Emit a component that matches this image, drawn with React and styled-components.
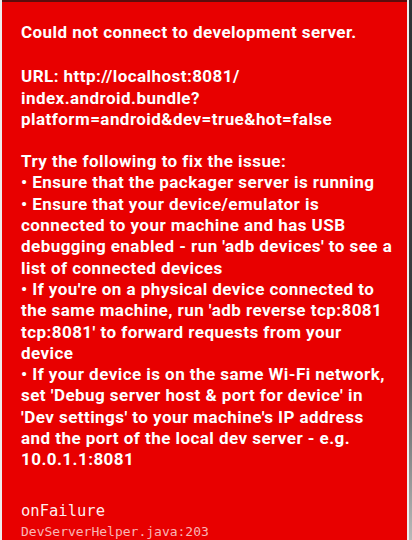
import React from 'react'
import styled, { createGlobalStyle } from 'styled-components'

const GlobalStyle = createGlobalStyle`
  html, body {
    margin: 0;
    padding: 0;
    background: #f0f0f0;
  }
`

const Screen = styled.div`
  display: flex;
  flex-direction: row;
  height: 540px;
  width: 412px;
  overflow: hidden;
  background: #eeeeee;
`

const RedBox = styled.div`
  flex: 0 0 405px;
  margin-left: 2px;
  box-sizing: border-box;
  background: #e80000;
  border-top: 2px solid #5c0c0c;
  padding: 20px 4px 0 19px;
  color: #ffffff;
  display: flex;
  flex-direction: column;
`

const Edge = styled.div`
  flex: 0 0 3px;
  margin-left: 2px;
  background: linear-gradient(#2e3436 0%, #3a3f41 60%, #b9b9b9 100%);
`

const Message = styled.div`
  font-family: Roboto, "Liberation Sans", sans-serif;
  font-weight: 700;
  font-size: 17px;
  letter-spacing: 0.45px;
  line-height: 21.3px;
  margin-top: ${p => p.gap || 0}px;
`

const Line = styled.div`
  white-space: nowrap;
`

const Stack = styled.div`
  margin-top: 30px;
  font-family: "DejaVu Sans Mono", "Liberation Mono", monospace;
`

const Method = styled.div`
  font-size: 15.5px;
  line-height: 21px;
  color: rgba(255, 255, 255, 0.95);
`

const Source = styled.div`
  font-size: 13px;
  line-height: 20px;
  color: rgba(255, 255, 255, 0.72);
`

const tips = [
  'Try the following to fix the issue:',
  '\u2022 Ensure that the packager server is running',
  '\u2022 Ensure that your device/emulator is',
  'connected to your machine and has USB',
  "debugging enabled - run 'adb devices' to see a",
  'list of connected devices',
  "\u2022 If you're on a physical device connected to",
  "the same machine, run 'adb reverse tcp:8081",
  "tcp:8081' to forward requests from your",
  'device',
  '\u2022 If your device is on the same Wi-Fi network,',
  "set 'Debug server host & port for device' in",
  "'Dev settings' to your machine's IP address",
  'and the port of the local dev server - e.g.',
  '10.0.1.1:8081'
]

const url = [
  'URL: http://localhost:8081/',
  'index.android.bundle?',
  'platform=android&dev=true&hot=false'
]

export default function App () {
  return (
    <Screen>
      <GlobalStyle />
      <RedBox>
        <Message>Could not connect to development server.</Message>
        <Message gap={23}>
          {url.map(l => <Line key={l}>{l}</Line>)}
        </Message>
        <Message gap={21}>
          {tips.map(l => <Line key={l}>{l}</Line>)}
        </Message>
        <Stack>
          <Method>onFailure</Method>
          <Source>DevServerHelper.java:203</Source>
        </Stack>
      </RedBox>
      <Edge />
    </Screen>
  )
}
